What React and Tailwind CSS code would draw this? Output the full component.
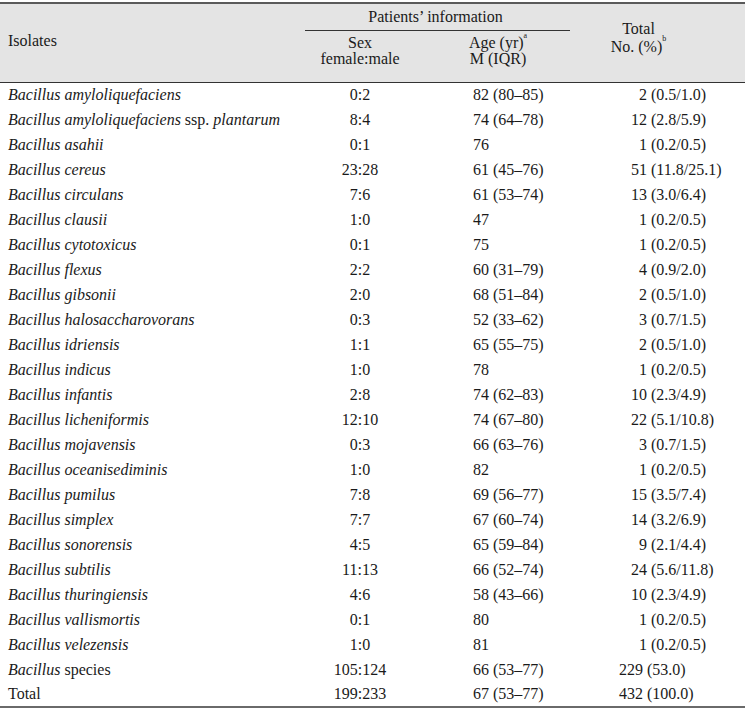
import React from "react";

const rows = [
  ["Bacillus amyloliquefaciens", "", "0:2", "82 (80–85)", "2", "(0.5/1.0)"],
  ["Bacillus amyloliquefaciens", "ssp.", "plantarum", "8:4", "74 (64–78)", "12", "(2.8/5.9)"],
  ["Bacillus asahii", "", "0:1", "76", "1", "(0.2/0.5)"],
  ["Bacillus cereus", "", "23:28", "61 (45–76)", "51", "(11.8/25.1)"],
  ["Bacillus circulans", "", "7:6", "61 (53–74)", "13", "(3.0/6.4)"],
  ["Bacillus clausii", "", "1:0", "47", "1", "(0.2/0.5)"],
  ["Bacillus cytotoxicus", "", "0:1", "75", "1", "(0.2/0.5)"],
  ["Bacillus flexus", "", "2:2", "60 (31–79)", "4", "(0.9/2.0)"],
  ["Bacillus gibsonii", "", "2:0", "68 (51–84)", "2", "(0.5/1.0)"],
  ["Bacillus halosaccharovorans", "", "0:3", "52 (33–62)", "3", "(0.7/1.5)"],
  ["Bacillus idriensis", "", "1:1", "65 (55–75)", "2", "(0.5/1.0)"],
  ["Bacillus indicus", "", "1:0", "78", "1", "(0.2/0.5)"],
  ["Bacillus infantis", "", "2:8", "74 (62–83)", "10", "(2.3/4.9)"],
  ["Bacillus licheniformis", "", "12:10", "74 (67–80)", "22", "(5.1/10.8)"],
  ["Bacillus mojavensis", "", "0:3", "66 (63–76)", "3", "(0.7/1.5)"],
  ["Bacillus oceanisediminis", "", "1:0", "82", "1", "(0.2/0.5)"],
  ["Bacillus pumilus", "", "7:8", "69 (56–77)", "15", "(3.5/7.4)"],
  ["Bacillus simplex", "", "7:7", "67 (60–74)", "14", "(3.2/6.9)"],
  ["Bacillus sonorensis", "", "4:5", "65 (59–84)", "9", "(2.1/4.4)"],
  ["Bacillus subtilis", "", "11:13", "66 (52–74)", "24", "(5.6/11.8)"],
  ["Bacillus thuringiensis", "", "4:6", "58 (43–66)", "10", "(2.3/4.9)"],
  ["Bacillus vallismortis", "", "0:1", "80", "1", "(0.2/0.5)"],
  ["Bacillus velezensis", "", "1:0", "81", "1", "(0.2/0.5)"],
];

function IsolateName({ row }) {
  // row with "ssp." has an extra italic tail
  if (row[1] === "ssp.") {
    return (
      <>
        <i>{row[0]}</i> ssp. <i>{row[2]}</i>
      </>
    );
  }
  return <i>{row[0]}</i>;
}

function TotalCell({ num, pct, left }) {
  return (
    <td className="p-0">
      <div className="flex">
        <span className={left ? "w-[73px] text-right" : "w-[77px] text-right"}>{num}</span>
        <span className="pl-[4px]">{pct}</span>
      </div>
    </td>
  );
}

export default function App() {
  return (
    <div
      className="w-[745px] h-[714px] bg-white pt-[2px] text-[#1a1a1a] text-[16px]"
      style={{ fontFamily: '"Liberation Serif", "DejaVu Serif", serif' }}
    >
      <table className="w-full table-fixed border-collapse">
        <colgroup>
          <col className="w-[300px]" />
          <col className="w-[120px]" />
          <col className="w-[150px]" />
          <col className="w-[175px]" />
        </colgroup>
        <thead className="bg-[#e4e4e4]">
          <tr className="h-[27px] border-t-2 border-[#5a5a5a]">
            <th rowSpan={2} className="text-left font-normal pl-[8px] pb-[4px] align-middle border-b border-[#333]">
              Isolates
            </th>
            <th colSpan={2} className="p-0 font-normal align-top">
              <div className="ml-[5px] border-b border-[#333] leading-[26px] text-center pr-[4px]">
                Patients’ information
              </div>
            </th>
            <th rowSpan={2} className="font-normal align-middle pr-[38px] border-b border-[#333]">
              <div className="leading-[18px] pb-[10px]">
                <div>Total</div>
                <div>
                  No. (%)<sup className="text-[8px] align-super">b</sup>
                </div>
              </div>
            </th>
          </tr>
          <tr className="h-[51px] border-b border-[#333]">
            <th className="font-normal align-top pt-[4px] leading-[16px] text-center">
              <div>Sex</div>
              <div>female:male</div>
            </th>
            <th className="font-normal align-top pt-[4px] leading-[16px] text-center pl-[6px]">
              <div>
                Age (yr)<sup className="text-[8px] align-super">a</sup>
              </div>
              <div>M (IQR)</div>
            </th>
          </tr>
        </thead>
        <tbody>
          {rows.map((row) => {
            const off = row[1] === "ssp." ? 1 : 0;
            return (
              <tr key={row[0] + off} className="h-[25px]">
                <td className="pl-[8px] p-0 whitespace-nowrap">
                  <IsolateName row={row} />
                </td>
                <td className="text-center p-0">{row[2 + off]}</td>
                <td className="pl-[53px] p-0">{row[3 + off]}</td>
                <TotalCell num={row[4 + off]} pct={row[5 + off]} />
              </tr>
            );
          })}
          <tr className="h-[25px]">
            <td className="pl-[8px] p-0">
              <i>Bacillus</i> species
            </td>
            <td className="text-center p-0">105:124</td>
            <td className="pl-[53px] p-0">66 (53–77)</td>
            <TotalCell num="229" pct="(53.0)" left />
          </tr>
          <tr className="h-[25px] border-b-2 border-[#6a6a6a]">
            <td className="pl-[8px] p-0">Total</td>
            <td className="text-center p-0">199:233</td>
            <td className="pl-[53px] p-0">67 (53–77)</td>
            <TotalCell num="432" pct="(100.0)" left />
          </tr>
        </tbody>
      </table>
    </div>
  );
}
